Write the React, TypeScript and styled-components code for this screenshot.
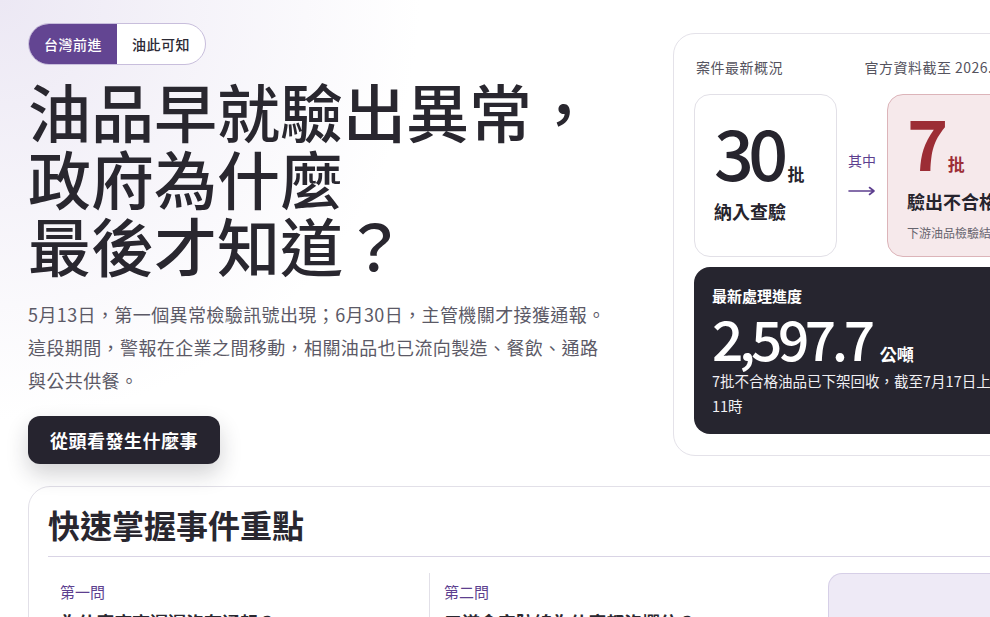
import styled, { createGlobalStyle } from 'styled-components';

const GlobalStyle = createGlobalStyle`
  html,
  body {
    margin: 0;
    padding: 0;
    overflow: hidden;
  }

  body {
    font-family: 'Noto Sans CJK TC', 'Noto Sans', sans-serif;
    color: #28262f;
    background: #ffffff;
  }

  * {
    box-sizing: border-box;
  }
`;

const Page = styled.main`
  width: 1080px;
  min-height: 100vh;
  padding: 23px 28px 40px;
  background:
    radial-gradient(circle at 0 0, #ece8f4 0, rgba(236, 232, 244, 0.55) 180px, rgba(255, 255, 255, 0) 420px),
    #ffffff;
`;

const Hero = styled.section`
  display: grid;
  grid-template-columns: 600px 379px;
  column-gap: 45px;
  align-items: start;
`;

const Intro = styled.div`
  display: flex;
  flex-direction: column;
  align-items: flex-start;
`;

const Switch = styled.div`
  display: inline-flex;
  height: 42px;
  border: 1px solid #c8bedc;
  border-radius: 999px;
  overflow: hidden;
  background: #ffffff;
`;

const SwitchItem = styled.span<{ active?: boolean }>`
  display: flex;
  align-items: center;
  padding: 0 15px;
  font-size: 14px;
  font-weight: 500;
  letter-spacing: 0.5px;
  color: ${(p) => (p.active ? '#ffffff' : '#2c2a35')};
  background: ${(p) => (p.active ? '#634592' : 'transparent')};
`;

const Headline = styled.h1`
  margin: 11px 0 0;
  font-size: 63px;
  line-height: 67px;
  font-weight: 500;
  letter-spacing: 0;
  color: #29272f;
`;

const Lead = styled.p`
  width: 580px;
  margin: 21px 0 0;
  font-size: 18px;
  line-height: 33px;
  letter-spacing: 0.4px;
  color: #5b5966;
`;

const PrimaryButton = styled.button`
  margin-top: 19px;
  height: 48px;
  padding: 0 22px;
  border: 0;
  border-radius: 12px;
  background: #26242f;
  color: #ffffff;
  font-family: inherit;
  font-size: 18px;
  font-weight: 700;
  letter-spacing: 0.5px;
  box-shadow: 0 10px 22px rgba(30, 28, 40, 0.2);
`;

const StatusCard = styled.aside`
  margin-top: 10px;
  padding: 23px 21px 21px 20px;
  border: 1px solid #e4e2e9;
  border-radius: 22px;
  background: #ffffff;
`;

const StatusHead = styled.div`
  display: flex;
  justify-content: space-between;
  padding-left: 2px;
  font-size: 14px;
  line-height: 20px;
  letter-spacing: 0.5px;
  color: #55535e;
  white-space: nowrap;
`;

const StatRow = styled.div`
  display: grid;
  grid-template-columns: 143px 1fr 143px;
  margin-top: 17px;
  height: 163px;
`;

const StatBox = styled.div<{ tone?: 'alert' }>`
  display: flex;
  flex-direction: column;
  justify-content: center;
  padding: ${(p) => (p.tone === 'alert' ? '3px 0 0 19px' : '0 0 5px 19px')};
  border: 1px solid ${(p) => (p.tone === 'alert' ? '#dcb4b9' : '#e2e0e7')};
  border-radius: 16px;
  background: ${(p) => (p.tone === 'alert' ? '#f6e9eb' : '#ffffff')};
  overflow: hidden;
  white-space: nowrap;
`;

const Figure = styled.div<{ tone?: 'alert' }>`
  display: flex;
  align-items: baseline;
  gap: 5px;
  font-size: 70px;
  line-height: 56px;
  font-weight: ${(p) => (p.tone === 'alert' ? 700 : 500)};
  letter-spacing: -0.08em;
  color: ${(p) => (p.tone === 'alert' ? '#9c2d35' : '#26242d')};
`;

const Unit = styled.span<{ tone?: 'alert' | 'dark' }>`
  font-size: 17px;
  line-height: 20px;
  font-weight: 700;
  letter-spacing: 0;
  color: ${(p) => (p.tone === 'alert' ? '#9c2d35' : p.tone === 'dark' ? '#ffffff' : '#26242d')};
`;

const StatLabel = styled.div`
  margin-top: 15px;
  font-size: 18px;
  line-height: 24px;
  font-weight: 700;
  color: #26242d;
`;

const StatNote = styled.div`
  margin-top: 11px;
  font-size: 12px;
  line-height: 18px;
  color: #66646e;
`;

const Bridge = styled.div`
  display: flex;
  flex-direction: column;
  align-items: center;
  justify-content: center;
  gap: 15px;
  padding-bottom: 4px;
  font-size: 14px;
  color: #5d3f8f;
`;

const ProgressBox = styled.div`
  margin-top: 10px;
  padding: 19px 18px 16px;
  border-radius: 16px;
  background: #26252f;
  color: #ffffff;
`;

const ProgressTitle = styled.div`
  font-size: 15px;
  font-weight: 700;
  line-height: 20px;
`;

const ProgressFigure = styled.div`
  display: flex;
  align-items: baseline;
  gap: 9px;
  font-size: 55px;
  line-height: 62px;
  font-weight: 500;
  letter-spacing: -0.08em;
`;

const ProgressNote = styled.div`
  width: 300px;
  font-size: 14.5px;
  line-height: 25px;
  color: #f1f0f4;
`;

const Digest = styled.section`
  margin-top: 22px;
  padding: 18px 0 0 19px;
  border: 1px solid #e2e0e8;
  border-radius: 22px;
  background: #ffffff;
  min-height: 300px;
`;

const DigestTitle = styled.h2`
  margin: 0;
  padding-bottom: 13px;
  font-size: 32px;
  line-height: 38px;
  font-weight: 700;
  color: #29272f;
  border-bottom: 1px solid #d9d4e5;
`;

const DigestGrid = styled.div`
  display: grid;
  grid-template-columns: 381px 382px 1fr;
  margin-top: 16px;
`;

const Question = styled.div<{ divided?: boolean }>`
  padding: 8px 14px 0 ${(p) => (p.divided ? '14px' : '11px')};
  border-left: 1px solid ${(p) => (p.divided ? '#e2e0e8' : 'transparent')};
  min-height: 120px;
`;

const QuestionTag = styled.div`
  font-size: 15px;
  line-height: 22px;
  color: #5d3f8f;
`;

const QuestionText = styled.div`
  margin-top: 6px;
  font-size: 18px;
  font-weight: 700;
  color: #29272f;
`;

const SideNote = styled.div`
  margin-left: 17px;
  min-height: 140px;
  border: 1px solid #d6cfe7;
  border-right: 0;
  border-radius: 14px 0 0 14px;
  background: #eeeaf6;
`;

const Arrow = () => (
  <svg width="28" height="12" viewBox="0 0 28 12" fill="none" aria-hidden="true">
    <path d="M1 6h25M21.5 2.5 26 6l-4.5 3.5" stroke="#5d3f8f" strokeWidth="1.6" strokeLinecap="round" strokeLinejoin="round" />
  </svg>
);

export default function App() {
  return (
    <>
      <GlobalStyle />
      <Page>
        <Hero>
          <Intro>
            <Switch>
              <SwitchItem active>台灣前進</SwitchItem>
              <SwitchItem>油此可知</SwitchItem>
            </Switch>
            <Headline>
              油品早就驗出異常，
              <br />
              政府為什麼
              <br />
              最後才知道？
            </Headline>
            <Lead>
              5月13日，第一個異常檢驗訊號出現；6月30日，主管機關才接獲通報。這段期間，警報在企業之間移動，相關油品也已流向製造、餐飲、通路與公共供餐。
            </Lead>
            <PrimaryButton>從頭看發生什麼事</PrimaryButton>
          </Intro>

          <StatusCard>
            <StatusHead>
              <span>案件最新概況</span>
              <span>官方資料截至 2026.07.17</span>
            </StatusHead>
            <StatRow>
              <StatBox>
                <Figure>
                  30<Unit>批</Unit>
                </Figure>
                <StatLabel>納入查驗</StatLabel>
              </StatBox>
              <Bridge>
                <span>其中</span>
                <Arrow />
              </Bridge>
              <StatBox tone="alert">
                <Figure tone="alert">
                  7<Unit tone="alert">批</Unit>
                </Figure>
                <StatLabel>驗出不合格</StatLabel>
                <StatNote>下游油品檢驗結果</StatNote>
              </StatBox>
            </StatRow>
            <ProgressBox>
              <ProgressTitle>最新處理進度</ProgressTitle>
              <ProgressFigure>
                2,597.7<Unit tone="dark">公噸</Unit>
              </ProgressFigure>
              <ProgressNote>7批不合格油品已下架回收，截至7月17日上午11時</ProgressNote>
            </ProgressBox>
          </StatusCard>
        </Hero>

        <Digest>
          <DigestTitle>快速掌握事件重點</DigestTitle>
          <DigestGrid>
            <Question>
              <QuestionTag>第一問</QuestionTag>
              <QuestionText>為什麼廠商遲遲沒有通報？</QuestionText>
            </Question>
            <Question divided>
              <QuestionTag>第二問</QuestionTag>
              <QuestionText>三道食安防線為什麼都沒攔住？</QuestionText>
            </Question>
            <SideNote />
          </DigestGrid>
        </Digest>
      </Page>
    </>
  );
}
